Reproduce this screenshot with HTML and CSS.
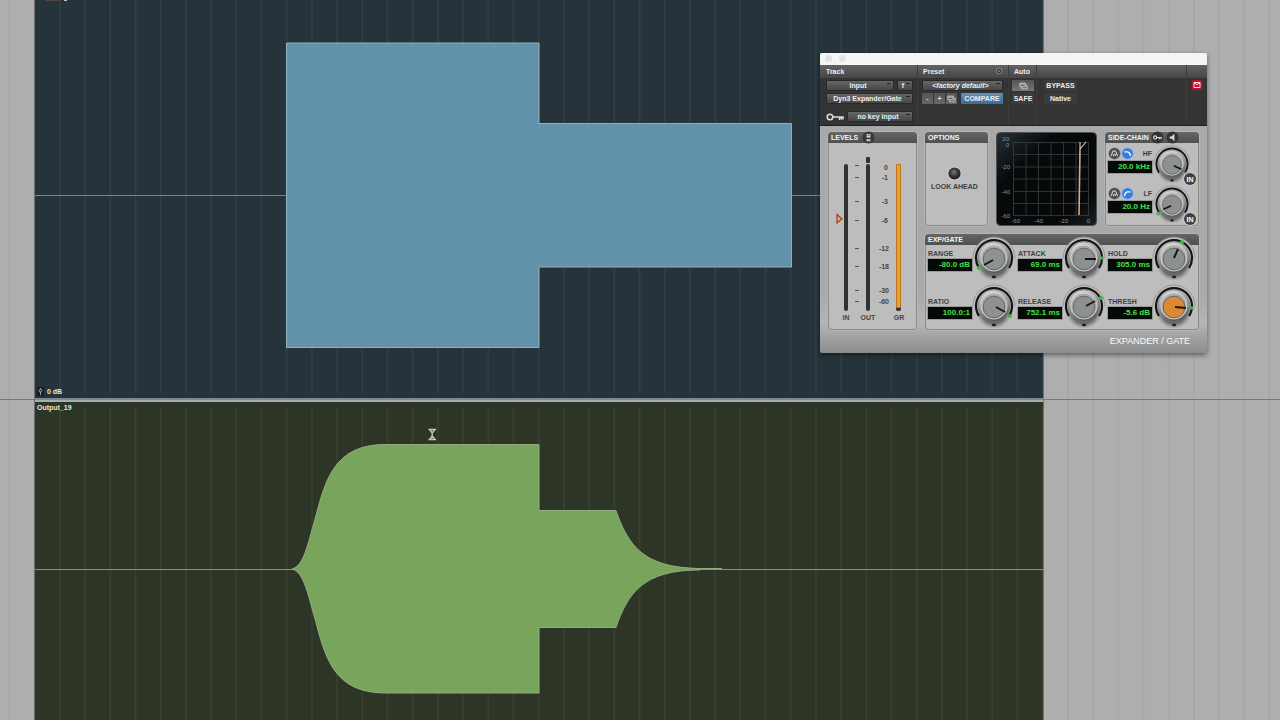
FILE: index.html
```html
<!DOCTYPE html>
<html lang="en">
<head>
<meta charset="utf-8">
<title>Expander / Gate</title>
<link rel="stylesheet" href="styles.css">
</head>
<body>
<svg class="defs" aria-hidden="true">
  <defs>
    <pattern id="lines" x="59" y="0" width="25.2" height="720" patternUnits="userSpaceOnUse"><rect width="1.6" height="720" fill="#fff" fill-opacity="0.055"/></pattern>
    <pattern id="graylines" x="59" y="0" width="25.2" height="720" patternUnits="userSpaceOnUse"><rect width="1.6" height="720" fill="#445" fill-opacity="0.08"/></pattern>
    <linearGradient id="metal" x1="0" y1="0" x2="0.3" y2="1"><stop offset="0" stop-color="#ededed"/><stop offset="0.5" stop-color="#a2a2a2"/><stop offset="1" stop-color="#5e5e5e"/></linearGradient>
    <radialGradient id="led" cx="0.45" cy="0.4"><stop offset="0" stop-color="#777"/><stop offset="0.6" stop-color="#3d3d3d"/><stop offset="1" stop-color="#222"/></radialGradient>
    <radialGradient id="shade"><stop offset="0.7" stop-color="#444" stop-opacity="0.7"/><stop offset="1" stop-color="#777" stop-opacity="0"/></radialGradient>
    <symbol id="knob" viewBox="-22 -22 44 44">
      <circle r="21" fill="#bcbcbc"/>
      <path d="M-21 0A21 21 0 0 1 21 0" fill="none" stroke="#8f8f8f" stroke-width="0.8"/>
      <ellipse cy="5" rx="18" ry="18" fill="url(#shade)"/>
      <path d="M-15 10A18 18 0 1 1 15 10" fill="none" stroke="#141414" stroke-width="2.2"/>
      <circle r="16" fill="url(#metal)" stroke="#777" stroke-width="0.6"/>
      <circle r="13" fill="#a9abaa" stroke="#cfcfcf" stroke-width="1"/>
      <circle cy="1" r="10.8" fill="currentColor" stroke="#686868" stroke-width="1"/>
      <ellipse cy="19" rx="2" ry="1.3" fill="#161616"/>
    </symbol>
    <symbol id="copy" viewBox="0 0 10 8"><path d="M1 .8h6v4H1zM1 2h6M3 4.8v2.4h6V3.2H7" fill="none" stroke="#c9c9c9" stroke-width="1"/></symbol>
    <symbol id="peak" viewBox="-7 -7 14 14"><circle r="6.2" fill="#4b4b4b" stroke="#888" stroke-width="0.6"/><path d="M-3.5 2.7L-2-2Q0-4 1.7-1.3L3.5 2.7M-1.4 2.8Q0-1.5 1.4 2.8" fill="none" stroke="#d8d8d8" stroke-width="1.1"/></symbol>
    <symbol id="shelf" viewBox="-7 -7 14 14"><circle r="6.2" fill="#367dde" stroke="#91bfff" stroke-width="0.9"/><path d="M-3.5-1.8H0Q3-1 3.2 2.6" fill="none" stroke="#eef7ff" stroke-width="1.5"/></symbol>
  </defs>
</svg>

<main class="timeline">
  <section class="track blue" aria-label="Source track">
    <svg class="gutter" viewBox="0 0 35 400" preserveAspectRatio="none"><rect width="35" height="400" fill="url(#graylines)"/><path d="M0 399.5h35" class="rule"/></svg>
    <div class="clip">
      <svg class="wave" viewBox="35 0 1008 400" preserveAspectRatio="none">
        <rect x="37" width="1006" height="393" fill="url(#lines)"/>
        <path class="mid" d="M35 195.5H1043"/>
        <path class="fill" d="M286.5 43H539V123.5H791.5V267H539V347.5H286.5Z"/>
        <path class="edge" d="M286.5 348V43H539V123.5H791.5V267"/>
        <path class="edge low" d="M791.5 267H539V347.5H286.5"/>
        <path d="M46 .5H60" stroke="#534741"/><path d="M64 .5H67" stroke="#bcc4c6"/>
      </svg>
      <span class="gain"><svg viewBox="0 0 8 10"><rect width="8" height="10" rx="1" fill="#151b1e"/><circle cx="4" cy="4" r="1.7" fill="none" stroke="#a9b4b8"/><path d="M4 1V2.5M4 5V9" stroke="#a9b4b8"/></svg>0 dB</span>
    </div>
    <svg class="gutter" viewBox="1043 0 237 400" preserveAspectRatio="none"><rect x="1045" width="235" height="400" fill="url(#graylines)"/><path d="M1043 399.5h237" class="rule"/></svg>
  </section>

  <section class="track green" aria-label="Output track">
    <svg class="gutter" viewBox="0 400 35 320" preserveAspectRatio="none"><rect y="400" width="35" height="320" fill="url(#graylines)"/></svg>
    <div class="clip">
      <svg class="wave" viewBox="35 400 1008 320" preserveAspectRatio="none">
        <rect x="37" y="407" width="1006" height="313" fill="url(#lines)"/>
        <path class="mid" d="M35 569.5H1043"/>
        <path class="fill" d="M292 569C304 566 308 543 315 519C325 482 333 444.5 385 444.5H539V510.5H616C628 545 643 568 700 568H722V570H700C643 570 628 593 616 627.5H539V693H385C333 693 325 656 315 619C308 595 304 572 292 569Z"/>
        <path class="edge" d="M292 569C304 566 308 543 315 519C325 482 333 444.5 385 444.5H539V510.5H616C628 545 643 568 700 568.5H722"/>
        <path class="edge low" d="M700 570C643 570 628 593 616 627.5H539V693H385C333 693 325 656 315 619C308 595 304 572 292 569"/>
        <path d="M428.5 429.5H436M428.5 439.5H436M430 430L432.2 433V436L430 439M434.5 430L432.2 433M432.2 436L434.5 439" fill="none" stroke="#c3cbbd" stroke-width="1.3"/>
      </svg>
      <span class="name">Output_19</span>
    </div>
    <svg class="gutter" viewBox="1043 400 237 320" preserveAspectRatio="none"><rect x="1045" y="400" width="235" height="320" fill="url(#graylines)"/></svg>
  </section>
</main>

<section class="plugin" aria-label="Expander / Gate plug-in">
  <div class="titlebar"><i></i><i></i></div>
  <header class="head">
    <div class="group track-group">
      <h2>Track</h2>
      <div class="line"><select class="grow" aria-label="Track"><option>Input</option></select><select class="insert" aria-label="Insert"><option>f</option></select></div>
      <div class="line"><select class="grow" aria-label="Plug-in"><option>Dyn3 Expander/Gate</option></select></div>
      <div class="line key"><svg class="keyicon" viewBox="0 0 18 8"><circle cx="4" cy="4" r="2.8" fill="none" stroke="#ddd" stroke-width="1.6"/><path d="M7 4H17V6.5M13.5 4V7M15.3 4V6.5" fill="none" stroke="#ddd" stroke-width="1.5"/></svg><select class="grow" aria-label="Key input"><option>no key input</option></select></div>
    </div>
    <div class="group preset-group">
      <h2>Preset<svg class="menu" viewBox="0 0 8 8"><circle cx="4" cy="4" r="2.8" fill="#333" stroke="#999" stroke-width="0.8"/><path d="M2.7 3.5h2.6L4 5z" fill="#bbb"/></svg></h2>
      <div class="line"><select class="grow italic" aria-label="Preset"><option>&lt;factory default&gt;</option></select></div>
      <div class="line steps"><button>-</button><button>+</button><button aria-label="Copy settings"><svg class="copy"><use href="#copy"/></svg></button><button class="compare">COMPARE</button></div>
    </div>
    <div class="group auto-group">
      <h2>Auto</h2>
      <div class="line"><button class="auto" aria-label="Automation"><svg class="copy"><use href="#copy"/></svg></button></div>
      <div class="line"><button class="flat">SAFE</button></div>
    </div>
    <div class="group bypass-group">
      <h2></h2>
      <div class="line"><button class="flat">BYPASS</button></div>
      <div class="line"><span class="flat">Native</span></div>
    </div>
    <div class="group target-group">
      <h2></h2>
      <div class="line"><button class="target" aria-label="Target"><svg viewBox="0 0 10 10"><path d="M2 2.5H8V7.5H2zM2 3.5H4L5 5L6 3.5H8" fill="none" stroke="#ffd9df"/></svg></button></div>
    </div>
  </header>

  <div class="body">
    <section class="panel levels">
      <h3>LEVELS <svg class="round" viewBox="-7 -7 14 14"><circle r="6.5" fill="#393939"/><path d="M-2-3.5H2V0H-2zM-2 1.5H2V4H-2z" fill="#eee"/><path d="M-1-2H1M-1 2.5H1" stroke="#333"/></svg></h3>
      <svg class="meters" viewBox="0 0 89 186">
        <g fill="#303131"><rect x="16" y="21" width="4" height="147" rx="2"/><rect x="38" y="21" width="4" height="147" rx="2"/><rect x="38" y="14" width="4" height="6" rx="1"/><rect x="68" y="159" width="5" height="9" rx="2"/></g>
        <rect x="68" y="21" width="5" height="144" rx="1" fill="#b8751c"/><rect x="69" y="22" width="3" height="142" fill="#eda02b"/>
        <path d="M27 22.5h4M27 34.5h4M27 58.5h4M27 77.5h4M27 105.5h4M27 123.5h4M27 147.5h4M27 158.5h4" stroke="#555"/>
        <path d="M9 71.5V80L14 76z" fill="#e7b848" stroke="#a43a3c" stroke-width="1.3"/>
        <g class="scale"><text x="60" y="27">0</text><text x="60" y="37">-1</text><text x="60" y="61">-3</text><text x="60" y="80">-6</text><text x="61" y="108">-12</text><text x="61" y="126">-18</text><text x="61" y="150">-30</text><text x="61" y="161">-60</text></g>
        <g class="names"><text x="18" y="177">IN</text><text x="40" y="177">OUT</text><text x="71" y="177">GR</text></g>
      </svg>
    </section>

    <section class="panel options">
      <h3>OPTIONS</h3>
      <button class="look"><svg viewBox="0 0 16 16"><circle cx="8" cy="8" r="7.5" fill="#d0d0d0"/><circle cx="8" cy="8" r="6.5" fill="url(#led)"/></svg>LOOK AHEAD</button>
    </section>

    <svg class="graph" viewBox="0 0 101 94" role="img" aria-label="Transfer curve">
      <defs><linearGradient id="glass" x1="0" y1="0" x2="1" y2="1"><stop offset="0" stop-color="#26323a"/><stop offset="0.3" stop-color="#070a0b"/><stop offset="0.8" stop-color="#060809"/><stop offset="1" stop-color="#1b2023"/></linearGradient></defs>
      <rect x="0.5" y="0.5" width="100" height="93" rx="4" fill="url(#glass)" stroke="#4a4e50"/>
      <path d="M17.5 10V84M30 10V84M42.5 10V84M55 10V84M67.5 10V84M80 10V84M92.5 10V84M17 10.5H93M17 22.5H93M17 35H93M17 47H93M17 59.5H93M17 71.5H93M17 83.5H93" stroke="#343a3b" stroke-width="0.9"/>
      <path d="M83 83L84 17" stroke="#d9a888" stroke-width="1.6"/><path d="M84 17V10M84 17L90 10" stroke="#d9d2ca" stroke-width="1.1"/>
      <g><text x="13" y="9">20</text><text x="13" y="15">0</text><text x="14" y="37">-20</text><text x="14" y="62">-40</text><text x="14" y="86">-60</text><text x="24" y="91">-60</text><text x="47" y="91">-40</text><text x="72" y="91">-20</text><text x="94" y="91">0</text></g>
    </svg>

    <section class="panel side">
      <h3>SIDE-CHAIN <svg class="round" viewBox="-7 -7 14 14"><circle r="6.5" fill="#333"/><circle cx="-2.5" r="1.7" fill="none" stroke="#ddd" stroke-width="1.2"/><path d="M-1 0H4V2M2 0V2" fill="none" stroke="#ddd" stroke-width="1.2"/></svg><svg class="round" viewBox="-7 -7 14 14"><circle r="6.5" fill="#333"/><path d="M-3-1H-1L2-4V4L-1 1H-3z" fill="#ddd"/></svg></h3>
      <div class="band">
        <div class="text">
          <div class="shapes"><button aria-label="Band-pass"><svg><use href="#peak"/></svg></button><button aria-label="Low-pass"><svg><use href="#shelf"/></svg></button><label for="hf">HF</label></div>
          <output for="hf">20.0 kHz</output>
        </div>
        <div class="dial">
          <svg class="face" viewBox="-22 -22 44 44"><use href="#knob" x="-22" y="-22" width="44" height="44"/><path d="M2 2L11 6" class="hand"/><circle class="dot" cx="17" cy="11" r="2.2"/></svg>
          <input id="hf" type="range"><button class="in">IN</button>
        </div>
      </div>
      <div class="band">
        <div class="text">
          <div class="shapes"><button aria-label="Band-pass"><svg><use href="#peak"/></svg></button><button aria-label="High-pass"><svg class="flip"><use href="#shelf"/></svg></button><label for="lf">LF</label></div>
          <output for="lf">20.0 Hz</output>
        </div>
        <div class="dial">
          <svg class="face" viewBox="-22 -22 44 44"><use href="#knob" x="-22" y="-22" width="44" height="44"/><path d="M-1 2L-10 6" class="hand"/><circle class="dot" cx="-16" cy="11" r="2.2"/></svg>
          <input id="lf" type="range"><button class="in">IN</button>
        </div>
      </div>
    </section>

    <section class="panel gate">
      <h3>EXP/GATE</h3>
      <div class="params">
        <div class="param"><div class="text"><label for="range">RANGE</label><output for="range">-80.0 dB</output></div><div class="dial"><svg class="face" viewBox="-22 -22 44 44"><use href="#knob" x="-22" y="-22" width="44" height="44"/><path d="M-1 2L-10 7" class="hand"/><circle class="dot" cx="-15" cy="10" r="2"/></svg><input id="range" type="range"></div></div>
        <div class="param"><div class="text"><label for="attack">ATTACK</label><output for="attack">69.0 ms</output></div><div class="dial"><svg class="face" viewBox="-22 -22 44 44"><use href="#knob" x="-22" y="-22" width="44" height="44"/><path d="M1 1H12" class="hand"/><circle class="dot" cx="18.5" cy="0" r="1.7"/></svg><input id="attack" type="range"></div></div>
        <div class="param"><div class="text"><label for="hold">HOLD</label><output for="hold">305.0 ms</output></div><div class="dial"><svg class="face" viewBox="-22 -22 44 44"><use href="#knob" x="-22" y="-22" width="44" height="44"/><path d="M0 0L4-9" class="hand"/><circle class="dot" cx="8" cy="-16" r="2"/></svg><input id="hold" type="range"></div></div>
        <div class="param"><div class="text"><label for="ratio">RATIO</label><output for="ratio">100.0:1</output></div><div class="dial"><svg class="face" viewBox="-22 -22 44 44"><use href="#knob" x="-22" y="-22" width="44" height="44"/><path d="M2 1L11 6" class="hand"/><circle class="dot" cx="16" cy="10" r="2"/></svg><input id="ratio" type="range"></div></div>
        <div class="param"><div class="text"><label for="release">RELEASE</label><output for="release">752.1 ms</output></div><div class="dial"><svg class="face" viewBox="-22 -22 44 44"><use href="#knob" x="-22" y="-22" width="44" height="44"/><path d="M2 0L11-5" class="hand"/><circle class="dot" cx="17" cy="-8" r="2"/></svg><input id="release" type="range"></div></div>
        <div class="param"><div class="text"><label for="thresh">THRESH</label><output for="thresh">-5.6 dB</output></div><div class="dial orange"><svg class="face" viewBox="-22 -22 44 44"><use href="#knob" x="-22" y="-22" width="44" height="44"/><path d="M1 1L12 2" class="hand"/><circle class="dot" cx="18" cy="2" r="1.8"/></svg><input id="thresh" type="range"></div></div>
      </div>
    </section>
  </div>
  <h1>EXPANDER / GATE</h1>
</section>
</body>
</html>
```
FILE: styles.css
```css
* { box-sizing: border-box; }
body { margin: 0; background: #aeaeae; font: bold 7px/9px "Liberation Sans", Arial, sans-serif; overflow: hidden; }
h1, h2, h3 { margin: 0; font: inherit; }
svg { display: block; overflow: visible; }
button, select, input { margin: 0; padding: 0; border: 0; font: inherit; color: inherit; appearance: none; background: none; }
.defs { position: absolute; width: 0; height: 0; }

/* arrangement */
.timeline { height: 100vh; display: grid; grid-template-rows: 5fr 4fr; }
.track { display: grid; grid-template-columns: 35fr 1008fr 237fr; min-height: 0; }
.gutter { width: 100%; height: 100%; min-height: 0; overflow: hidden; }
.rule { stroke: #777; }
.clip { position: relative; min-height: 0; box-shadow: 0 0 0 1px #6c7171; }
.wave { width: 100%; height: 100%; overflow: hidden; }
.blue .clip { background: linear-gradient(to top, #7d898e 2px, #26333a 2px); }
.green .clip { background: linear-gradient(#a4b0af 2px, #2d3526 2px); box-shadow: -1px 0 #6c7171, 1px 0 #6c7171; }
.mid, .edge { fill: none; stroke-width: 1; }
.blue .mid { stroke: #6a8c9b; }
.green .mid { stroke: #7f9772; }
.blue .fill { fill: #6393aa; }
.green .fill { fill: #78a55b; }
.blue .edge { stroke: #8fb1c0; }
.green .edge { stroke: #91ab82; }
.gain, .name { position: absolute; left: 2px; display: flex; align-items: center; gap: 3px; color: #e2e6e4; }
.gain { bottom: 4px; }
.gain svg { width: 7px; height: 9px; }
.name { top: 3px; }

/* plug-in window */
.plugin { position: absolute; left: 820px; top: 53px; width: 387px; color: #eee; background: linear-gradient(#a9a9a9 0, #a9a9a9 80%, #b5b5b5 90%, #8c8c8c); border-radius: 2px; box-shadow: 0 2px 5px #0007; }
.titlebar { height: 12px; display: flex; gap: 7px; padding: 2px 5px; background: #f5f5f5; border-radius: 2px 2px 0 0; }
.titlebar i { width: 7px; height: 7px; border-radius: 50%; background: #e2e2e2; }
.head { display: grid; grid-template-columns: 98px 91px 28px 1fr 20px; height: 61px; background: #343434; border-bottom: 1px solid #202020; }
.group { display: flex; flex-direction: column; gap: 2px; border-right: 1px solid #3c3c3c; }
.target-group { border: 0; }
.head h2 { height: 13px; padding: 2px 6px; background: linear-gradient(#636363, #464646); display: flex; justify-content: space-between; }
.preset-group h2 { padding: 2px 5px; }
.auto-group h2 { padding: 2px 5px; }
.line { display: flex; gap: 3px; height: 11px; padding: 0 4px 0 6px; }
.key { margin-top: 5px; }
.keyicon { width: 18px; height: 8px; align-self: center; }
.grow { flex: 1; min-width: 0; }
select { height: 11px; padding: 0 6px 0 2px; text-align: center; text-align-last: center; color: #eee; border: 1px solid #292929; border-radius: 1px; background: linear-gradient(#222, #222) right 2px top 2px / 4px 1px no-repeat, linear-gradient(#676767, #464646); }
.insert { width: 16px; }
.italic { font-style: italic; }
.menu { width: 8px; height: 8px; }
.preset-group .line { padding: 0 5px 0 4px; }
.steps { gap: 1px; }
.steps button { width: 11px; background: linear-gradient(#555, #666); color: #ddd; }
.steps button svg, .auto svg { width: 9px; height: 8px; margin: auto; }
.steps .compare { width: 42px; margin-left: 3px; color: #e5f0fa; background: linear-gradient(#6790b7, #3c6a98); border-radius: 1px; }
.auto-group .line { padding: 0 2px 0 3px; }
.auto-group button { flex: 1; }
.auto { background: linear-gradient(#555, #777); }
.flat { background: #3b3b3b; line-height: 11px; text-align: center; color: #eee; }
.bypass-group .line { padding: 0 7px; }
.bypass-group .flat { width: 33px; }
.target-group .line { padding: 0 5px; }
.target { width: 10px; height: 10px; background: #c90c30; border-radius: 2px; }

.body { display: grid; grid-template-columns: 89px 63px 101px 1fr; grid-template-rows: 94px 96px; gap: 8px; padding: 6px 8px 0; color: #3e3e3e; }
.panel { min-width: 0; background: #bdbdbd; border-radius: 4px; box-shadow: inset 0 0 0 1px #8a8a8a, 0 0 0 1px #b5b5b5; }
.panel h3 { height: 11px; padding: 1px 3px; background: linear-gradient(#666, #505050); border-radius: 4px 4px 0 0; color: #f4f4f4; display: flex; align-items: center; gap: 4px; }
.round { width: 13px; height: 13px; }
.levels { grid-row: 1 / 3; }
.meters { width: 100%; }
.meters text { fill: #454545; }
.scale { text-anchor: end; }
.names { text-anchor: middle; }
.look { display: flex; flex-direction: column; align-items: center; gap: 1px; width: 100%; margin-top: 23px; padding: 0 6px 0 2px; white-space: nowrap; }
.look svg { width: 15px; height: 15px; }
.graph { width: 100%; height: 94px; }
.graph text { fill: #8d9698; font-weight: normal; font-size: 6px; text-anchor: end; }
.side h3 { gap: 1px; justify-content: space-between; padding-right: 20px; }
.band { display: flex; height: 40px; padding: 4px 0 0 3px; }
.shapes { display: flex; align-items: center; height: 13px; }
.shapes svg { width: 13px; height: 13px; }
.shapes label { margin-left: auto; }
.flip { transform: scaleX(-1); }
.text { width: 44px; display: flex; flex-direction: column; }
output { height: 12px; margin-top: 1px; padding: 0 2px; background: #060a06; color: #46e04f; font-size: 8px; line-height: 12px; text-align: right; box-shadow: 0 0 0 1px #999; }
.dial { position: relative; width: 44px; height: 44px; color: #8d918f; }
.dial input { position: absolute; inset: 0; width: 100%; height: 100%; opacity: 0; }
.orange { color: #dc8931; }
.face { width: 100%; height: 100%; }
.hand { stroke: #151515; stroke-width: 2; }
.dot { fill: #35bf45; }
.band .dial { width: 38px; height: 38px; margin: -2px 0 0 1px; }
.in { position: absolute; right: -5px; bottom: -2px; width: 12px; height: 12px; border-radius: 50%; background: #404040; color: #fff; box-shadow: 0 0 0 1px #ccc; text-align: center; }
.gate { grid-column: 2 / 5; }
.params { display: grid; grid-template-columns: repeat(3, 1fr); grid-template-rows: 48px 48px; margin-top: -9px; padding: 0 1px 0 3px; }
.param { display: flex; }
.param .text { padding-top: 13px; }
.plugin h1 { padding: 5px 17px 6px; color: #fafafa; font: normal 9px/12px "Liberation Sans Narrow", "Liberation Sans", Arial, sans-serif; text-align: right; }
```
